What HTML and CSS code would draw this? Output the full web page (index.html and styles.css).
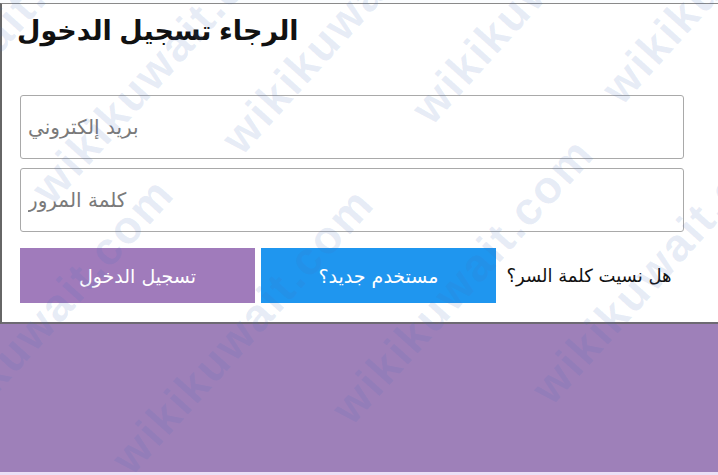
FILE: index.html
```html
<!DOCTYPE html>
<html lang="ar">
<head>
    <meta charset="UTF-8">
    <meta name="viewport" content="width=device-width, initial-scale=1.0">
    <title>تسجيل الدخول</title>
    <link rel="stylesheet" href="styles.css">
</head>
<body>

    <div class="page">

        <!-- Login box -->
        <div class="login-box">
            <h1 class="title">الرجاء تسجيل الدخول</h1>

            <div class="fields">
                <input type="text" class="field" placeholder="بريد إلكتروني">
                <input type="password" class="field" placeholder="كلمة المرور">
            </div>

            <div class="actions">
                <button class="btn btn-login">تسجيل الدخول</button>
                <button class="btn btn-new">مستخدم جديد؟</button>
                <a href="#" class="forgot">هل نسيت كلمة السر؟</a>
            </div>
        </div>

        <div class="footer-strip"></div>

        <!-- Watermark -->
        <div class="watermark">
            <span style="left: -120px; top: 150px;">wikikuwait.com</span>
            <span style="left: 60px; top: 160px;">wikikuwait.com</span>
            <span style="left: 250px; top: 110px;">wikikuwait.com</span>
            <span style="left: 440px; top: 80px;">wikikuwait.com</span>
            <span style="left: 630px; top: 60px;">wikikuwait.com</span>
            <span style="left: -60px; top: 420px;">wikikuwait.com</span>
            <span style="left: 140px; top: 430px;">wikikuwait.com</span>
            <span style="left: 360px; top: 380px;">wikikuwait.com</span>
            <span style="left: 560px; top: 360px;">wikikuwait.com</span>
        </div>

    </div>

</body>
</html>
```

FILE: styles.css
```css
* {
    margin: 0;
    padding: 0;
    box-sizing: border-box;
    font-family: "DejaVu Sans", "Liberation Sans", sans-serif;
}

body {
    background: #9e80b9;
    width: 718px;
    height: 475px;
    overflow: hidden;
}

.page {
    position: relative;
    height: 475px;
    display: flex;
    flex-direction: column;
    padding-top: 3px;
    /* thin light line on top, purple area below the box */
    background: linear-gradient(#fbfdff 0, #fbfdff 3px, #9e80b9 3px);
}

/* Login box */
.login-box {
    background: white;
    border-top: 1px solid #8a8a8a;
    border-left: 2px solid #666;
    border-bottom: 2px solid #6d6a72;
    padding: 9px 34px 17px 18px;
    height: 321px;
}

.title {
    direction: rtl;
    text-align: left;
    font-family: "Liberation Sans", "DejaVu Sans", sans-serif;
    font-size: 27px;
    font-weight: bold;
    color: #111;
    line-height: 36px;
    margin-left: -3px;
}

.fields {
    display: flex;
    flex-direction: column;
    gap: 9px;
    margin-top: 46px;
}

.field {
    width: 664px;
    height: 64px;
    border: 1px solid #a9a9a9;
    border-radius: 3px;
    padding: 0 7px;
    font-size: 20px;
    color: #333;
    outline: none;
}

.field::placeholder {
    color: #7a7a7a;
}

/* Buttons row */
.actions {
    display: flex;
    align-items: center;
    gap: 6px;
    margin-top: 16px;
}

.btn {
    width: 235px;
    height: 55px;
    border: none;
    color: white;
    font-size: 19px;
    cursor: pointer;
}

.btn-login { background: #a07bbb; }
.btn-new { background: #1f96ef; }

.forgot {
    flex: 1;
    text-align: center;
    color: #111;
    font-size: 18px;
    text-decoration: none;
    direction: rtl;
    padding-right: 8px;
}

.footer-strip {
    margin-top: auto;
    height: 3px;
    background: #ebe0f6;
}

/* Watermark */
.watermark {
    position: absolute;
    inset: 0;
    pointer-events: none;
    overflow: hidden;
}

.watermark span {
    position: absolute;
    font-family: "Liberation Sans", sans-serif;
    font-weight: bold;
    font-size: 46px;
    color: rgba(70, 110, 190, 0.13);
    transform: rotate(-48deg);
    transform-origin: left bottom;
    white-space: nowrap;
    letter-spacing: 2px;
}
```
